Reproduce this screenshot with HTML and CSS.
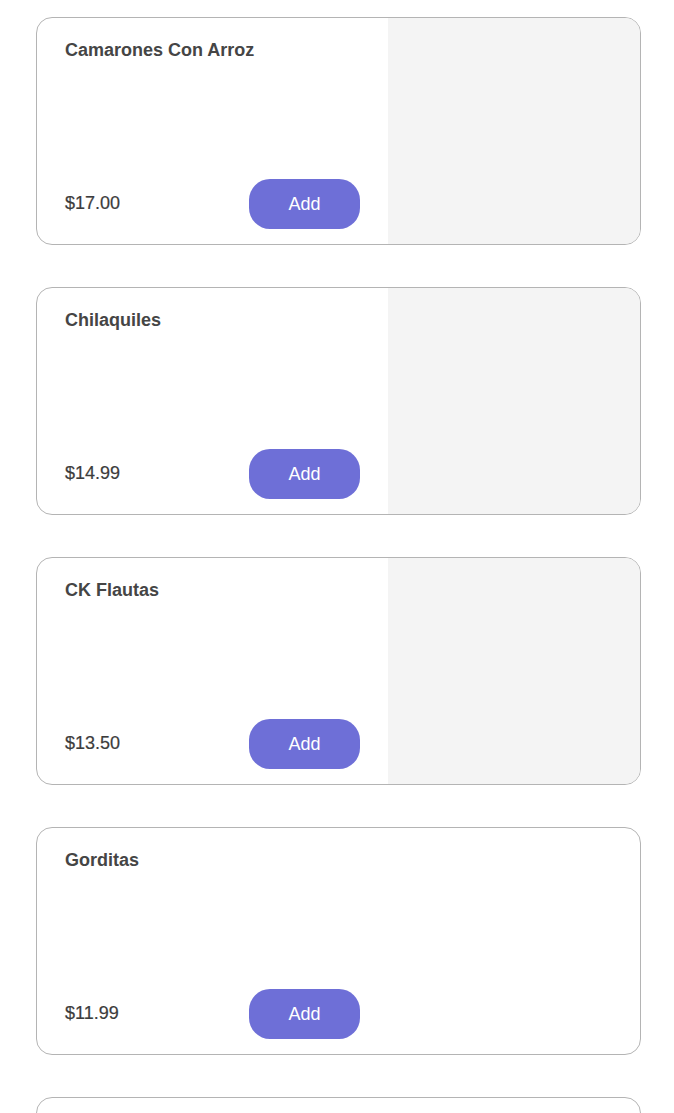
FILE: index.html
```html
<!doctype html>
<html lang="en">

<head>
    <meta charset="utf-8">
    <meta name="viewport" content="width=device-width, initial-scale=1">
    <title>Menu</title>
    <link rel="stylesheet" href="styles.css">
</head>

<body>
    <div class="menu-list">
        <div class="menu-item">
            <div class="item-info">
                <div class="item-name">Camarones Con Arroz</div>
                <div class="item-bottom">
                    <div class="item-price">$17.00</div>
                    <button class="add-button">Add</button>
                </div>
            </div>
            <div class="item-photo"></div>
        </div>
        <div class="menu-item">
            <div class="item-info">
                <div class="item-name">Chilaquiles</div>
                <div class="item-bottom">
                    <div class="item-price">$14.99</div>
                    <button class="add-button">Add</button>
                </div>
            </div>
            <div class="item-photo"></div>
        </div>
        <div class="menu-item">
            <div class="item-info">
                <div class="item-name">CK Flautas</div>
                <div class="item-bottom">
                    <div class="item-price">$13.50</div>
                    <button class="add-button">Add</button>
                </div>
            </div>
            <div class="item-photo"></div>
        </div>
        <div class="menu-item">
            <div class="item-info">
                <div class="item-name">Gorditas</div>
                <div class="item-bottom">
                    <div class="item-price">$11.99</div>
                    <button class="add-button">Add</button>
                </div>
            </div>
        </div>
        <!-- next item, only its top edge shows -->
        <div class="menu-item"></div>
    </div>
</body>
</html>
```

FILE: styles.css
```css
body {
    margin: 0;
    padding: 0;
    background: #fff;
    font-family: "Liberation Sans", Arial, sans-serif;
    color: #454545;
}
.menu-list {
    padding: 17px 0 0 36px;
    display: flex;
    flex-direction: column;
    gap: 42px;
}
.menu-item {
    width: 605px;
    height: 228px;
    flex-shrink: 0;
    box-sizing: border-box;
    border: 1px solid #b4b4b4;
    border-radius: 16px;
    overflow: hidden;
    display: flex;
}
.item-info {
    width: 351px;
    box-sizing: border-box;
    padding: 21px 28px 15px 28px;
    display: flex;
    flex-direction: column;
    justify-content: space-between;
}
.item-name {
    font-size: 18px;
    font-weight: bold;
    line-height: 22px;
}
.item-bottom {
    display: flex;
    align-items: center;
    justify-content: space-between;
}
.item-price {
    font-size: 18px;
    line-height: 22px;
    padding-bottom: 3px;
    color: #3c3c3c;
    -webkit-text-stroke: 0.2px #3c3c3c;
}
.add-button {
    width: 111px;
    height: 50px;
    border: none;
    border-radius: 21px;
    background-color: #6e6fd7;
    color: #fff;
    font-family: "Liberation Sans", Arial, sans-serif;
    font-size: 18px;
    font-weight: 300;
    padding: 0;
    padding-top: 1px;
}
.item-photo {
    flex: 1;
    background-color: #f4f4f4;
}
```
